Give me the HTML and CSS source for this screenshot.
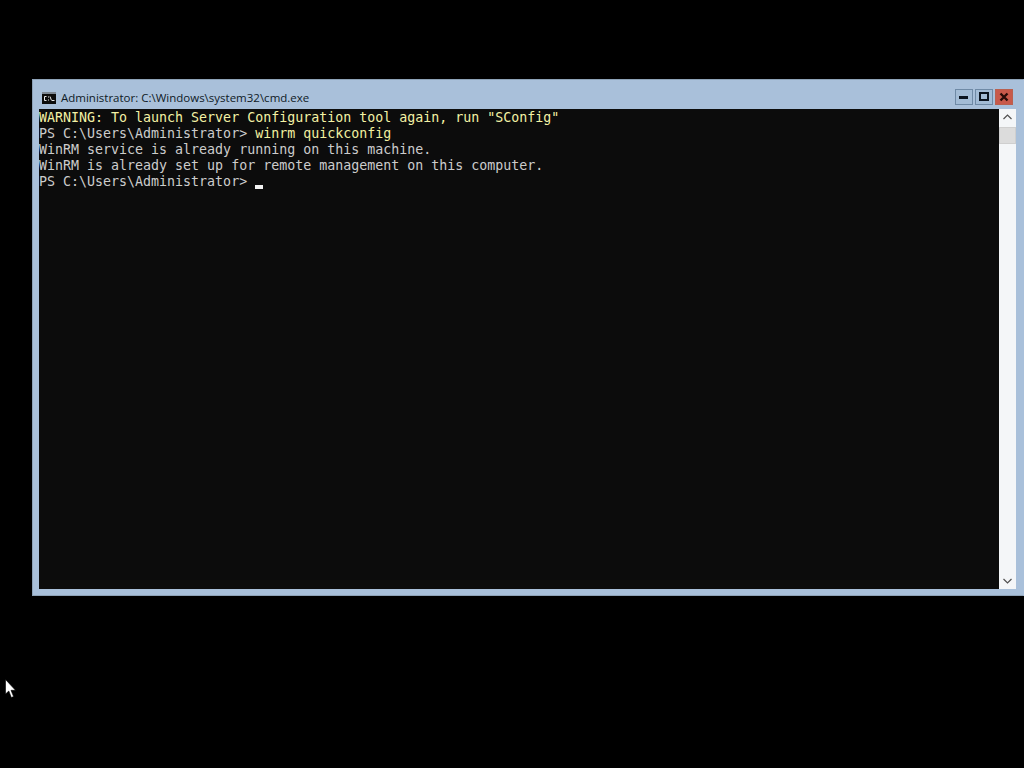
FILE: index.html
```html
<!DOCTYPE html>
<html lang="en">
<head>
<meta charset="utf-8">
<title>Administrator: C:\Windows\system32\cmd.exe</title>
<link rel="stylesheet" href="styles.css">
</head>
<body>
<div class="desktop">
  <div class="window">
    <div class="titlebar">
      <svg class="app-icon" width="14" height="12" viewBox="0 0 14 12">
        <rect x="0" y="0" width="14" height="12" fill="#0c0c0c"/>
        <rect x="0" y="0" width="14" height="2" fill="#7f8994"/>
        <path d="M4.5 4.5H2.5V8.5H4.5M6.5 4.5V5.5M6.5 7.5V8.5M8 4.5L9.5 8.5M10 8.5H12.5" fill="none" stroke="#e8e8e8"/>
      </svg>
      <span class="title">Administrator: C:\Windows\system32\cmd.exe</span>
      <div class="controls">
        <div class="btn"><svg width="18" height="16" viewBox="0 0 18 16"><rect x="4" y="7" width="9" height="3" fill="#0b1420"/></svg></div>
        <div class="btn"><svg width="18" height="16" viewBox="0 0 18 16"><rect x="5" y="4" width="8" height="7" fill="none" stroke="#0b1420" stroke-width="2"/></svg></div>
        <div class="btn close"><svg width="18" height="16" viewBox="0 0 18 16"><path d="M5.5 4.5L12.5 11.5M12.5 4.5L5.5 11.5" fill="none" stroke="#2a0c08" stroke-width="2.4"/></svg></div>
      </div>
    </div>
    <div class="body">
      <pre class="console"><span class="warn">WARNING: To launch Server Configuration tool again, run "SConfig"</span>
PS C:\Users\Administrator&gt; <span class="cmd">winrm</span> <span class="cmd">quickconfig</span>
WinRM service is already running on this machine.
WinRM is already set up for remote management on this computer.
PS C:\Users\Administrator&gt; <span class="caret"></span></pre>
      <div class="scrollbar">
        <div class="arrow"><svg width="17" height="17" viewBox="0 0 17 17"><path d="M4.5 10L8.5 6L12.5 10" fill="none" stroke="#505050" stroke-width="1.2"/></svg></div>
        <div class="thumb"></div>
        <div class="track"></div>
        <div class="arrow"><svg width="17" height="17" viewBox="0 0 17 17"><path d="M4.5 7L8.5 11L12.5 7" fill="none" stroke="#505050" stroke-width="1.2"/></svg></div>
      </div>
    </div>
  </div>
  <svg class="cursor" width="12" height="20" viewBox="0 0 12 20">
    <path d="M0.5 0.5V15L3.8 12L6.3 18.5L8.6 17.6L6 11.3H10.5Z" fill="#fff" stroke="#000" stroke-width="0.6"/>
  </svg>
</div>
</body>
</html>
```
FILE: styles.css
```css
html, body {
  margin: 0;
  padding: 0;
  background: #000;
}
.desktop {
  position: relative;
  width: 1024px;
  height: 768px;
  overflow: hidden;
  background: #000;
}
.window {
  position: absolute;
  left: 32px;
  top: 79px;
  width: 992px;
  height: 517px;
  box-sizing: border-box;
  display: flex;
  flex-direction: column;
  background: #a9c0da;
  border: 1px solid #8ea3b8;
  border-right-color: #a9c0da;
  padding: 0 7px 6px 6px;
}
.titlebar {
  height: 29px;
  box-sizing: border-box;
  padding: 6px 0 0 3px;
  display: flex;
  align-items: center;
  flex: none;
}
.app-icon {
  flex: none;
  margin-right: 5px;
}
.title {
  font-family: "Open Sans", "Liberation Sans", sans-serif;
  font-size: 11.5px;
  color: #0f1a26;
  white-space: nowrap;
}
.controls {
  margin-left: auto;
  display: flex;
  gap: 2px;
  margin-right: 3px;
  margin-top: -2px;
}
.btn {
  width: 18px;
  height: 16px;
  box-sizing: border-box;
  display: flex;
  align-items: center;
  justify-content: center;
  border: 1px solid #6f8aa6;
  background: #a3bcd6;
}
.btn svg {
  flex: none;
  margin: -1px;
}
.btn.close {
  background: #c8594a;
  border-color: #b9604f;
}
.body {
  flex: 1;
  display: flex;
  min-height: 0;
}
.console {
  flex: 1;
  margin: 0;
  padding: 1px 0 0;
  background: #0c0c0c;
  color: #cccccc;
  font-family: "DejaVu Sans Mono", "Liberation Mono", monospace;
  font-size: 13.3px;
  line-height: 16px;
  overflow: hidden;
}
.warn {
  color: #f4f2a6;
}
.cmd {
  color: #f2f0a0;
}
.caret {
  display: inline-block;
  width: 8px;
  height: 4px;
  background: #f2f2f2;
  vertical-align: -3px;
}
.scrollbar {
  width: 17px;
  flex: none;
  display: flex;
  flex-direction: column;
  background: #f4f6f8;
}
.arrow {
  height: 17px;
  flex: none;
}
.arrow svg {
  display: block;
}
.thumb {
  height: 17px;
  flex: none;
  margin-top: 1px;
  background: #dcdcdc;
  border: 1px solid #cfcfcf;
  box-sizing: border-box;
}
.track {
  flex: 1;
}
.cursor {
  position: absolute;
  left: 5px;
  top: 679px;
}
```
